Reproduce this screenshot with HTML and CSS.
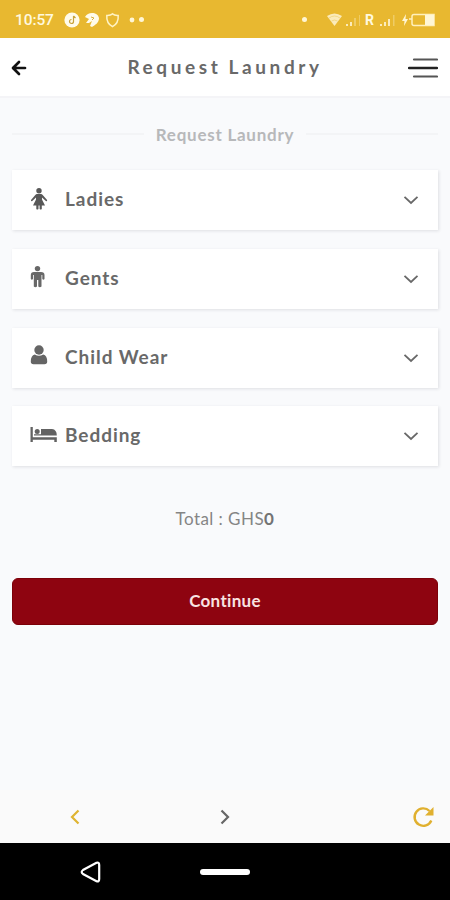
FILE: index.html
```
<!DOCTYPE html>
<html lang="en">
<head>
<meta charset="utf-8">
<title>Request Laundry</title>
<link rel="stylesheet" href="styles.css">
</head>
<body>
<div class="status">
  <span class="clock">10:57</span>
  <svg class="notices" width="76" height="16" viewBox="0 0 76 16">
    <circle cx="8" cy="8" r="7.600" fill="#fffbea"/>
    <path d="M9.500 4v5.500a2 2 0 1 1-2-2M9.500 4l2 2" fill="none" stroke="#c8a239" stroke-width="1.200"/>
    <path d="M21 5C24-1 34 0 35 6c0 5-4 7-7 9l-2-1 2-5-3 2-3 0 3-4z" fill="#fffbea"/>
    <path d="M27 5l3 1-2 2" fill="none" stroke="#d9b13d"/>
    <path d="M48.500 1.800c2 1.500 4 1.500 5.700 1.700.4 5-1.700 9-5.700 11.200-4-2.200-6.100-6.200-5.700-11.200 1.700-.2 3.700-.2 5.700-1.700z" fill="none" stroke="#fff3c4" stroke-width="1.500"/>
    <circle cx="68" cy="8" r="2.400" fill="#fff6d5"/>
  </svg>
  <i class="dot"></i>
  <i class="dot alone"></i>
  <svg class="signals" width="110" height="24" viewBox="0 -4 110 24">
    <path d="M0 4Q7.500-1 15 4L7.500 14z" fill="#fbebba"/>
    <path d="M2 6q5.500-4 11 0M4.500 9q3-2 6 0" fill="none" stroke="#e9c452" stroke-width=".5"/>
    <g fill="#fbebba"><path d="M19 12h2v2h-2zM23 10h2v4h-2zM53 12h2v2h-2zM57 10h2v4h-2zM61 7h2v7h-2z"/><path d="M27 6h2v8h-2zM32 3h1v11h-1zM66 3h1.500v11H66z" opacity=".4"/></g>
    <text x="38" y="13.300" class="roaming">R</text>
    <path d="M79 2l-4 7h2.500l-.5 5 4-7h-2.500z" fill="#fff6d5"/>
    <path d="M82 7h3M87 2.500h20v11H87q-2 0-2-2v-7q0-2 2-2z" fill="none" stroke="#fff0bd" stroke-width="1.500"/>
    <path d="M98 3h9v10h-9z" fill="#fff6d5"/>
  </svg>
</div>
<header class="header">
  <svg class="back" width="16" height="16" viewBox="0 0 16 16"><path d="M8 2L2 8l6 6M2.500 8H14" fill="none" stroke="#111" stroke-width="2.700" stroke-linecap="round" stroke-linejoin="round"/></svg>
  <h1>Request Laundry</h1>
  <svg class="menu" width="30" height="22" viewBox="0 0 30 22"><path d="M6 2.500h23M6 19.500h23" stroke="#555" stroke-width="2.200" stroke-linecap="round"/><path d="M1 11h28" stroke="#222" stroke-width="2.400" stroke-linecap="round"/></svg>
</header>
<main>
  <div class="divider"><span>Request Laundry</span></div>
  <section class="list">
    <div class="card">
      <svg class="icon" width="28" height="24" viewBox="0 0 28 24"><g fill="#585858"><circle cx="9" cy="3.800" r="2.700"/><path d="M7 7h4q1 0 1.700 1l4.400 5q.4 1.300-1 1.300L12 10.500v2l3 6h-3.200v3.500q-1.200 1.200-2.200 0v-3.500H8.500V22q-1.200 1.200-2.200 0v-3.500H3l3-6v-2l-4 3.800q-1.400 0-1-1.300L5.300 8Q6 7 7 7z"/></g></svg>
      <span>Ladies</span>
      <svg class="chevron" width="16" height="10" viewBox="0 0 16 10"><path d="M1.500 1.800L8 8l6.500-6.200"/></svg>
    </div>
    <div class="card">
      <svg class="icon" width="28" height="24" viewBox="0 0 28 24"><g fill="#686868"><circle cx="7.500" cy="3.600" r="2.700"/><path d="M4 7h7q3.500 0 3.500 3v4q-1 1.500-2.200 0v-4h-.8v11.500q-1.700 1.500-3.200 0V15H7v6.500q-1.700 1.500-3.200 0V10H3v4q-1.200 1.500-2.200 0v-4q0-3 3.200-3z"/></g></svg>
      <span>Gents</span>
      <svg class="chevron" width="16" height="10" viewBox="0 0 16 10"><path d="M1.500 1.800L8 8l6.500-6.200"/></svg>
    </div>
    <div class="card">
      <svg class="icon" width="28" height="24" viewBox="0 0 28 24"><g fill="#656565"><circle cx="9" cy="6" r="4.700"/><path d="M4.800 10.500q4.200 2.500 8.400 0 4 1 4 7 0 2.700-2.700 2.700h-11q-2.700 0-2.700-2.700 0-6 4-7z"/></g></svg>
      <span>Child Wear</span>
      <svg class="chevron" width="16" height="10" viewBox="0 0 16 10"><path d="M1.500 1.800L8 8l6.500-6.200"/></svg>
    </div>
    <div class="card">
      <svg class="icon" width="28" height="24" viewBox="0 0 28 24"><g fill="#626262"><path d="M.5 4h2.300v10.200h24V19h-2.500v-2.300H2.800V19H.5z"/><circle cx="7.200" cy="8.600" r="2.500"/><path d="M11 6h11q4.800.5 4.800 6.500H4v-1.200h7z"/></g></svg>
      <span>Bedding</span>
      <svg class="chevron" width="16" height="10" viewBox="0 0 16 10"><path d="M1.500 1.800L8 8l6.500-6.200"/></svg>
    </div>
  </section>
  <p class="total">Total : GHS<b>0</b></p>
  <button class="continue"><span>Continue</span></button>
</main>
<nav class="browser">
  <svg width="10" height="16" viewBox="0 0 10 16"><path d="M8.500 1.500L2 8l6.500 6.500" fill="none" stroke="#dfb431" stroke-width="2.200"/></svg>
  <svg width="10" height="16" viewBox="0 0 10 16"><path d="M1.500 1.500L8 8l-6.500 6.500" fill="none" stroke="#666" stroke-width="2.200"/></svg>
  <svg width="22" height="22" viewBox="0 0 22 22"><path d="M19.300 14.500A8.700 8.700 0 1 1 17.500 5" fill="none" stroke="#e0b02f" stroke-width="2.400"/><path d="M21.500 1v8.500H13z" fill="#e0b02f"/></svg>
</nav>
<footer class="system">
  <svg width="21" height="22" viewBox="0 0 21 22"><path d="M16.500 1.800L3 9q-2.600 2 0 4l13.500 7.200q2.700.8 2.700-2.200V4q0-3-2.700-2.200z" fill="none" stroke="#fff" stroke-width="2.200"/></svg>
  <i class="home"></i>
</footer>
</body>
</html>
```
FILE: styles.css
```
* { box-sizing: border-box; }
body {
  margin: 0;
  height: 900px;
  display: flex;
  flex-direction: column;
  background: #f9fafc;
  font-family: Lato, "Open Sans", sans-serif;
  font-variant-ligatures: none;
  color: #696969;
  overflow: hidden;
}
svg { display: block; flex: none; }
.status {
  height: 38px;
  display: flex;
  align-items: center;
  padding: 1px 13px 0 15px;
  background: #e8b830;
  color: #fff9df;
}
.clock {
  width: 49px;
  font: 500 15.5px Roboto, sans-serif;
  letter-spacing: -.1px;
}
.dot {
  width: 5px;
  height: 5px;
  margin-left: -1px;
  border-radius: 50%;
  background: #fff6d5;
}
.alone { margin-left: 158px; }
.signals { margin-left: 20px; }
.roaming { font: 700 14px Roboto, sans-serif; fill: #fff9df; }
.header {
  height: 60px;
  display: flex;
  align-items: center;
  justify-content: space-between;
  padding: 1px 12px 0 11px;
  background: #fff;
  border-bottom: 2px solid #f4f4f7;
}
h1 {
  margin: -2px 0 0 15px;
  font-size: 19px;
  font-weight: 700;
  line-height: 24px;
  letter-spacing: 3.6px;
  word-spacing: -1px;
  white-space: nowrap;
}
main {
  flex: 1;
  padding: 23px 12px 0;
}
.divider {
  display: flex;
  align-items: center;
  gap: 12px;
  height: 26px;
  color: #b7b8ba;
  font-size: 17px;
  font-weight: 700;
  letter-spacing: .75px;
  white-space: nowrap;
}
.divider::before, .divider::after {
  content: "";
  flex: 1;
  height: 2px;
  background: #f3f4f6;
}
.list {
  display: grid;
  gap: 18.8px;
  margin-top: 23px;
}
.card {
  height: 60px;
  display: flex;
  align-items: center;
  padding: 0 19px 3px 18px;
  background: #fff;
  box-shadow: 1px 1px 3px rgba(30, 35, 50, .12);
  font-size: 19px;
  font-weight: 700;
  letter-spacing: .95px;
}
.icon { margin: 0 7px 0 0; }
.chevron {
  margin: 3px 0 0 auto;
  fill: none;
  stroke: #686868;
  stroke-width: 1.8;
}
.total {
  margin: 42px 0 0;
  height: 22px;
  line-height: 22px;
  text-align: center;
  font-size: 17px;
  letter-spacing: .45px;
  color: #858585;
}
.total b { color: #737373; }
.continue {
  display: block;
  width: 100%;
  height: 47px;
  margin-top: 47.6px;
  padding: 0 0 2px;
  border: 1px solid #7b0008;
  border-radius: 6px;
  background: #8e0410;
  color: #f9e3e2;
  font: 700 17px Lato, sans-serif;
  font-variant-ligatures: none;
  letter-spacing: .3px;
}
.browser {
  height: 53px;
  display: grid;
  grid-template-columns: 150px 150px 1fr;
  align-items: center;
  justify-items: center;
  padding-top: 1px;
  background: #fafafa;
}
.browser svg:last-child { justify-self: end; margin-right: 16px; }
.system {
  height: 57px;
  display: grid;
  grid-template-columns: 1fr 50px 1fr;
  align-items: center;
  padding-top: 1px;
  background: #000;
}
.system svg { margin-left: 80px; }
.home {
  height: 6px;
  border-radius: 3px;
  background: #fff;
}
```
